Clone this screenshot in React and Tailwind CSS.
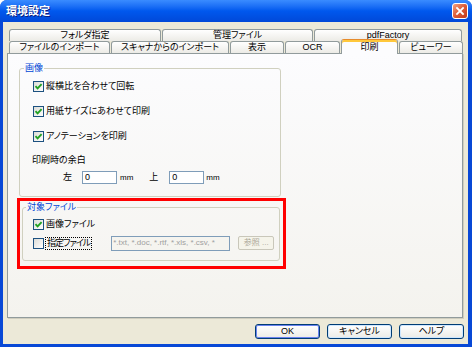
import React from 'react';

const font = "font-['Liberation_Sans','Noto_Sans_CJK_JP',sans-serif] [font-feature-settings:'palt']";

const topTabs = [
  { label: 'フォルダ指定', w: 'w-[152px]' },
  { label: '管理ファイル', w: 'w-[151px]' },
  { label: 'pdfFactory', w: 'w-[148px]' },
];

const bottomTabs = [
  { label: 'ファイルのインポート', w: 'w-[101px]' },
  { label: 'スキャナからのインポート', w: 'w-[118px]' },
  { label: '表示', w: 'w-[54px]' },
  { label: 'OCR', w: 'w-[55px]' },
  { label: '印刷', w: 'w-[57px]', active: true },
  { label: 'ビューワー', w: 'w-[64px]' },
];

const CheckBox = ({ checked }) => (
  <span className="flex h-[11px] w-[11px] shrink-0 items-center justify-center border border-[#1C5180] bg-gradient-to-br from-[#DCDCD7] to-white">
    {checked && (
      <svg width="9" height="9" viewBox="0 0 9 9">
        <path d="M1.5 4.2 L3.6 6.4 L7.6 2.2" fill="none" stroke="#21A121" strokeWidth="1.9" />
      </svg>
    )}
  </span>
);

const Tab = ({ tab }) => {
  if (tab.active) {
    return (
      <div
        className={`${tab.w} relative top-[1px] z-10 flex h-[15px] items-center justify-center rounded-t-[3px] border border-b-0 border-[#919B9C] border-t-[#E68B2C] bg-[#FCFCFE] shadow-[inset_0_2px_0_#FFC83C] text-[9px] leading-none text-black`}
      >
        {tab.label}
      </div>
    );
  }
  return (
    <div
      className={`${tab.w} flex h-full items-center justify-center rounded-t-[3px] border border-b-0 border-[#919B9C] bg-gradient-to-b from-white to-[#ECEBE6] text-[9px] leading-none text-black`}
    >
      {tab.label}
    </div>
  );
};

const Button = ({ label, isDefault }) => (
  <button
    className={`flex h-[15px] w-[65px] items-center justify-center rounded-[3px] border border-[#003C74] bg-gradient-to-b from-white to-[#ECEBE6] text-[9px] leading-none text-black ${
      isDefault ? 'shadow-[inset_0_0_0_1px_#6982EE]' : 'shadow-[inset_0_0_0_1px_#CEE7FF]'
    }`}
  >
    {label}
  </button>
);

const App = () => {
  return (
    <div className={`h-[347px] w-[472px] bg-white ${font}`}>
      <div className="flex h-full flex-col rounded-t-[7px] bg-[#0848D6]">
        {/* Title bar */}
        <div className="flex h-[22px] shrink-0 items-center justify-between rounded-t-[7px] bg-gradient-to-b from-[#3A8CFF] via-[#0058EE] to-[#0148D8] pl-[6px] pr-[4px]">
          <span className="text-[11px] font-bold leading-none text-white [text-shadow:1px_1px_0_#0A1E80]">
            環境設定
          </span>
          <div className="flex h-[16px] w-[16px] items-center justify-center rounded-[3px] border border-white bg-gradient-to-br from-[#F0A080] via-[#DC5A36] to-[#C0391A]">
            <svg width="10" height="10" viewBox="0 0 10 10">
              <path d="M2 2 L8 8 M8 2 L2 8" stroke="white" strokeWidth="1.8" strokeLinecap="square" />
            </svg>
          </div>
        </div>

        {/* Window body */}
        <div className="ml-[3px] mr-[4px] mb-[3px] flex flex-1 flex-col bg-[#ECE9D8] pt-[7px]">
          {/* Tabs */}
          <div className="flex flex-col pl-[6px]">
            <div className="flex h-[12px] items-end gap-[1px]">
              {topTabs.map((tab) => (
                <Tab key={tab.label} tab={tab} />
              ))}
            </div>
            <div className="flex h-[12px] items-end gap-[1px]">
              {bottomTabs.map((tab) => (
                <Tab key={tab.label} tab={tab} />
              ))}
            </div>
          </div>

          {/* Tab panel */}
          <div className="ml-[4px] h-[265px] w-[456px] border border-[#919B9C] bg-gradient-to-b from-[#FCFCFE] to-[#F4F3EE] shadow-[1px_1px_0_#D0CEBF]">
            {/* 画像 */}
            <fieldset className="ml-[11px] mt-[8px] w-[262px] rounded-[3px] border border-[#D0D0BF]">
              <legend className="ml-[4px] px-[1px] text-[9px] leading-[12px] text-[#0046D5]">画像</legend>
              <div className="flex flex-col pl-[13px] pt-[6px] pb-[12px] text-[9px] leading-none text-black">
                <label className="flex h-[13px] items-center gap-[2px]">
                  <CheckBox checked />
                  <span>縦横比を合わせて回転</span>
                </label>
                <label className="mt-[12px] flex h-[13px] items-center gap-[2px]">
                  <CheckBox checked />
                  <span>用紙サイズにあわせて印刷</span>
                </label>
                <label className="mt-[12px] flex h-[13px] items-center gap-[2px]">
                  <CheckBox checked />
                  <span>アノテーションを印刷</span>
                </label>
                <div className="-ml-[1px] mt-[11px] flex h-[13px] items-center">印刷時の余白</div>
                <div className="mt-[4px] flex h-[13px] items-center pl-[30px]">
                  <span>左</span>
                  <div className="ml-[10px] flex h-[13px] w-[35px] items-center border border-[#7F9DB9] bg-white pl-[2px]">0</div>
                  <span className="ml-[3px] text-[8px]">mm</span>
                  <span className="ml-[16px]">上</span>
                  <div className="ml-[11px] flex h-[13px] w-[35px] items-center border border-[#7F9DB9] bg-white pl-[2px]">0</div>
                  <span className="ml-[2px] text-[8px]">mm</span>
                </div>
              </div>
            </fieldset>

            {/* 対象ファイル (highlighted) */}
            <div className="ml-[9px] mt-[1px] h-[71px] w-[269px] border-[3px] border-[#FF0000]">
              <fieldset className="ml-[2px] w-[258px] rounded-[3px] border border-[#D0D0BF]">
                <legend className="ml-[3px] px-[1px] text-[9px] leading-[12px] text-[#0046D5]">対象ファイル</legend>
                <div className="flex flex-col pl-[10px] pt-[5px] pb-[9px] text-[9px] leading-none text-black">
                  <label className="flex h-[13px] items-center gap-[1px]">
                    <CheckBox checked />
                    <span className="ml-[1px]">画像ファイル</span>
                  </label>
                  <div className="mt-[4px] flex h-[16px] items-center">
                    <CheckBox />
                    <span className="ml-[1px] shrink-0 whitespace-nowrap border border-dotted border-black px-[1px] py-[1px] tracking-[-1px]">指定ファイル</span>
                    <div className="ml-[19px] flex h-[15px] w-[119px] shrink-0 items-center overflow-hidden whitespace-nowrap border border-[#7F9DB9] bg-[#F5F4EF] pl-[1px] text-[8px] text-[#A0A0A0]">
                      *.txt, *.doc, *.rtf, *.xls, *.csv, *
                    </div>
                    <div className="ml-[8px] flex h-[14px] w-[36px] shrink-0 items-center justify-center whitespace-nowrap rounded-[2px] border border-[#C9C7BA] bg-[#F5F4EA] text-[8px] text-[#ACA899]">
                      参照 ...
                    </div>
                  </div>
                </div>
              </fieldset>
            </div>
          </div>

          {/* Dialog buttons */}
          <div className="mt-[6px] flex justify-end gap-[7px] pr-[4px]">
            <Button label="OK" isDefault />
            <Button label="キャンセル" />
            <Button label="ヘルプ" />
          </div>
        </div>
      </div>
    </div>
  );
};

export default App;
